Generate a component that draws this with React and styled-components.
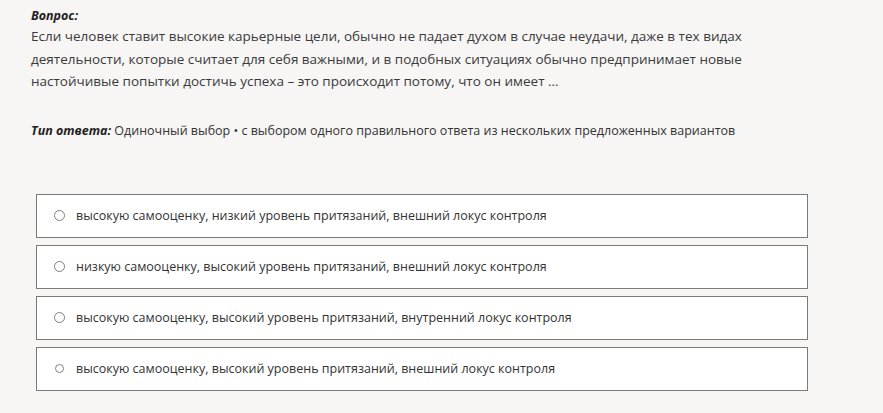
import React from 'react'
import styled, { createGlobalStyle } from 'styled-components'

const GlobalStyle = createGlobalStyle`
  html, body {
    margin: 0;
    padding: 0;
    background: #f7f6f5;
  }
  body {
    font-family: "Open Sans", "Noto Sans", sans-serif;
    color: #333;
  }
`

const options = [
  { text: 'высокую самооценку, низкий уровень притязаний, внешний локус контроля' },
  { text: 'низкую самооценку, высокий уровень притязаний, внешний локус контроля' },
  { text: 'высокую самооценку, высокий уровень притязаний, внутренний локус контроля' },
  { text: 'высокую самооценку, высокий уровень притязаний, внешний локус контроля', small: true },
]

function App() {
  return (
    <Page>
      <GlobalStyle />
      <Question>
        <QuestionLabel>Вопрос:</QuestionLabel>
        <Body>
          Если человек ставит высокие карьерные цели, обычно не падает духом в случае неудачи, даже в тех видах
          деятельности, которые считает для себя важными, и в подобных ситуациях обычно предпринимает новые
          настойчивые попытки достичь успеха – это происходит потому, что он имеет ...
        </Body>
      </Question>

      <AnswerType>
        <Label>Тип ответа:</Label> Одиночный выбор • с выбором одного правильного ответа из нескольких предложенных вариантов
      </AnswerType>

      <Options>
        {options.map((o, i) => (
          <Option key={i}>
            <Radio small={o.small} />
            <OptionText>{o.text}</OptionText>
          </Option>
        ))}
      </Options>
    </Page>
  )
}

export default App

const Page = styled.div`
  padding: 7px 0 0 31px;
  width: 883px;
  height: 413px;
  box-sizing: border-box;
  overflow: hidden;
`

const Question = styled.div`
  width: 780px;
`

const Label = styled.span`
  font-weight: 700;
  font-style: italic;
  color: #222;
`

const QuestionLabel = styled(Label)`
  display: block;
  line-height: 18px;
  font-size: 12.5px;
`

const Body = styled.div`
  font-size: 13.5px;
  line-height: 22.5px;
  color: #3a3a3a;
`

const AnswerType = styled.div`
  margin-top: 27px;
  font-size: 12.5px;
  line-height: 22px;
`

const Options = styled.div`
  margin: 52px 0 0 5px;
  width: 772px;
  display: flex;
  flex-direction: column;
  gap: 7px;
`

const Option = styled.div`
  display: flex;
  align-items: center;
  height: 44px;
  box-sizing: border-box;
  background: #fff;
  border: 1px solid #7a7a7a;
  padding-left: 17px;
`

const Radio = styled.span`
  width: ${(p) => (p.small ? '7px' : '9px')};
  height: ${(p) => (p.small ? '7px' : '9px')};
  margin-left: ${(p) => (p.small ? '1px' : '0')};
  margin-right: ${(p) => (p.small ? '12px' : '11px')};
  border: 1px solid #808080;
  border-radius: 50%;
  flex: none;
`

const OptionText = styled.span`
  font-size: 12.5px;
  color: #333;
`
